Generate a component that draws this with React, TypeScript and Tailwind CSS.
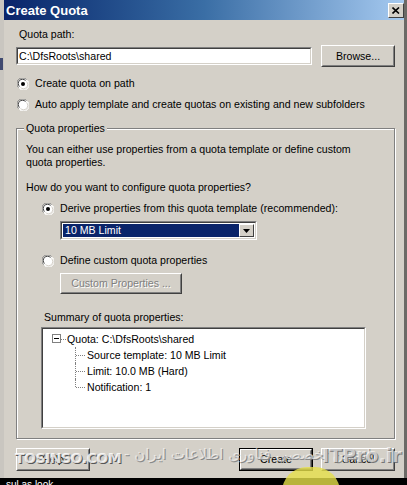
import React from "react"

const font = "font-['Tahoma','Liberation_Sans',sans-serif] text-[10.6px] leading-[13px] text-black"

const Radio = ({ checked }: { checked?: boolean }) => (
  <svg width="12" height="12" viewBox="0 0 12 12" className="shrink-0">
    <circle cx="6" cy="6" r="5.5" fill="#fff" />
    <path d="M1.5 9.5 A5 5 0 0 1 9.5 1.5" stroke="#808080" strokeWidth="1" fill="none" />
    <path d="M2.5 8.5 A4 4 0 0 1 8.5 2.5" stroke="#404040" strokeWidth="1" fill="none" />
    <path d="M10.5 2.5 A5 5 0 0 1 2.5 10.5" stroke="#ffffff" strokeWidth="1" fill="none" />
    <path d="M9.5 3.5 A4 4 0 0 1 3.5 9.5" stroke="#d4d0c8" strokeWidth="1" fill="none" />
    {checked && <circle cx="6" cy="6" r="2" fill="#000" />}
  </svg>
)

const Btn = ({ label, className = "", disabled = false, def = false }: { label: string; className?: string; disabled?: boolean; def?: boolean }) => (
  <div className={`${def ? "border border-black" : ""} ${className}`}>
    <div className="h-full border border-t-white border-l-white border-r-[#404040] border-b-[#404040] bg-[#d4d0c8]">
      <div className="flex h-full items-center justify-center border border-transparent border-r-[#808080] border-b-[#808080]">
        <span className={disabled ? "text-[#808080] [text-shadow:1px_1px_0_#fff]" : ""}>{label}</span>
      </div>
    </div>
  </div>
)

const Sunken = ({ className = "", children }: { className?: string; children?: React.ReactNode }) => (
  <div className={`border border-t-[#808080] border-l-[#808080] border-r-white border-b-white ${className}`}>
    <div className="h-full border border-t-[#404040] border-l-[#404040] border-r-[#d4d0c8] border-b-[#d4d0c8] bg-white">
      {children}
    </div>
  </div>
)

const TreeChild = ({ text, last }: { text: string; last?: boolean }) => (
  <div className="relative flex h-[16px] items-center pl-[44px]">
    <div className={`absolute left-[32px] top-0 border-l border-dotted border-[#808080] ${last ? "h-[8px]" : "h-[16px]"}`} />
    <div className="absolute left-[33px] top-[8px] w-[9px] border-t border-dotted border-[#808080]" />
    <span>{text}</span>
  </div>
)

export default function App() {
  return (
    <div className={`relative h-[485px] w-[407px] overflow-hidden bg-black ${font}`}>
      <div className="flex h-[478px]">
        {/* strip of the desktop behind */}
        <div className="w-[4px] bg-[#c9c6c0]">
          <div className="mt-[58px] h-[12px] w-[3px] bg-[#404a70]" />
        </div>
        <div className="flex flex-1 flex-col border-r-[3px] border-r-[#6b6a66] bg-[#d4d0c8]">
          {/* title bar */}
          <div className="flex h-[20px] items-center justify-between bg-gradient-to-r from-[#0a246a] via-[#3a6ea5] to-[#a6caf0] pl-[2px] pr-[0px]">
            <span className="text-[13px] font-bold text-white">Create Quota</span>
            <div className="flex h-[15px] w-[16px] items-center justify-center border border-t-white border-l-white border-r-[#404040] border-b-[#404040] bg-[#d4d0c8]">
              <svg width="8" height="7" viewBox="0 0 8 7">
                <path d="M0.5 0.5 L7 6.5 M7 0.5 L0.5 6.5" stroke="#000" strokeWidth="1.6" />
              </svg>
            </div>
          </div>

          <div className="flex flex-1 flex-col pl-[12px] pr-[9px]">
            <div className="mt-[8px] pl-[3px]">Quota path:</div>
            <div className="mt-[4px] flex items-center justify-between">
              <Sunken className="h-[18px] w-[296px]">
                <div className="pl-[1px] pt-[1px]">C:\DfsRoots\shared</div>
              </Sunken>
              <Btn label="Browse..." className="h-[22px] w-[74px]" />
            </div>

            <div className="mt-[10px] flex items-center gap-[6px] pl-[1px]">
              <Radio checked />
              <span>Create quota on path</span>
            </div>
            <div className="mt-[8px] flex items-center gap-[6px] pl-[1px]">
              <Radio />
              <span>Auto apply template and create quotas on existing and new subfolders</span>
            </div>

            {/* group box */}
            <div className="relative mt-[17px] h-[311px] border border-[#808080] shadow-[1px_1px_0_#fff,inset_1px_1px_0_#fff]">
              <span className="absolute left-[7px] top-[-7px] bg-[#d4d0c8] px-[2px]">Quota properties</span>
              <div className="px-[9px] pt-[14px]">
                <p>You can either use properties from a quota template or define custom<br />quota properties.</p>
                <p className="mt-[12px]">How do you want to configure quota properties?</p>

                <div className="pl-[16px]">
                  <div className="mt-[8px] flex items-center gap-[6px]">
                    <Radio checked />
                    <span>Derive properties from this quota template (recommended):</span>
                  </div>
                  <div className="mt-[6px] ml-[18px] w-[197px]">
                    <Sunken className="h-[19px]">
                      <div className="flex h-full items-center justify-between p-[1px]">
                        <div className="flex h-full flex-1 items-center bg-[#0a246a] pl-[2px] text-white">10 MB Limit</div>
                        <div className="flex h-full w-[15px] items-center justify-center border border-t-white border-l-white border-r-[#404040] border-b-[#404040] bg-[#d4d0c8]">
                          <svg width="7" height="4" viewBox="0 0 7 4"><path d="M0 0 H7 L3.5 4 Z" fill="#000" /></svg>
                        </div>
                      </div>
                    </Sunken>
                  </div>

                  <div className="mt-[14px] flex items-center gap-[6px]">
                    <Radio />
                    <span>Define custom quota properties</span>
                  </div>
                  <Btn label="Custom Properties ..." disabled className="ml-[18px] mt-[6px] h-[21px] w-[122px]" />
                </div>

                <div className="mt-[17px] pl-[18px]">Summary of quota properties:</div>
                <Sunken className="ml-[15px] mt-[3px] h-[102px] w-[325px]">
                  <div className="pt-[2px]">
                    <div className="relative flex h-[16px] items-center pl-[24px]">
                      <div className="absolute left-[9px] top-[3px] flex h-[9px] w-[9px] items-center justify-center border border-[#808080] bg-white">
                        <div className="h-px w-[5px] bg-black" />
                      </div>
                      <div className="absolute left-[18px] top-[8px] w-[5px] border-t border-dotted border-[#808080]" />
                      <span>Quota: C:\DfsRoots\shared</span>
                    </div>
                    <TreeChild text="Source template: 10 MB Limit" />
                    <TreeChild text="Limit: 10.0 MB (Hard)" />
                    <TreeChild text="Notification: 1" last />
                  </div>
                </Sunken>
              </div>
            </div>

            <div className="mt-[9px] flex items-center justify-between">
              <Btn label="Help" className="h-[23px] w-[74px]" />
              <div className="flex gap-[8px]">
                <Btn label="Create" def className="h-[23px] w-[74px]" />
                <Btn label="Cancel" className="h-[23px] w-[74px]" />
              </div>
            </div>
          </div>
        </div>
      </div>

      {/* below the dialog */}
      <div className="absolute left-[6px] top-[480px] text-[10px] leading-[10px] text-white">sul as look</div>
      <div className="absolute left-[282px] top-[467px] h-[50px] w-[58px] rounded-full bg-[#e6e04a]/80" />

      {/* watermark overlay */}
      <div className="pointer-events-none absolute left-[15px] top-[452px] font-['DejaVu_Sans',sans-serif] text-[14px] font-bold tracking-[-0.5px] text-white/80 [text-shadow:1px_1px_0_#555]">TOSINSO.COM</div>
      <div dir="rtl" className="pointer-events-none absolute left-[124px] top-[448px] font-['DejaVu_Sans',sans-serif] text-[15px] text-white/55 [text-shadow:1px_1px_0_#888]">انجمن تخصصی فناوری اطلاعات ایران -</div>
      <div className="pointer-events-none absolute left-[322px] top-[449px] font-['DejaVu_Sans',sans-serif] text-[19px] font-bold text-white/60 [text-shadow:1px_1px_0_#777]">ITPro.ir</div>
    </div>
  )
}
